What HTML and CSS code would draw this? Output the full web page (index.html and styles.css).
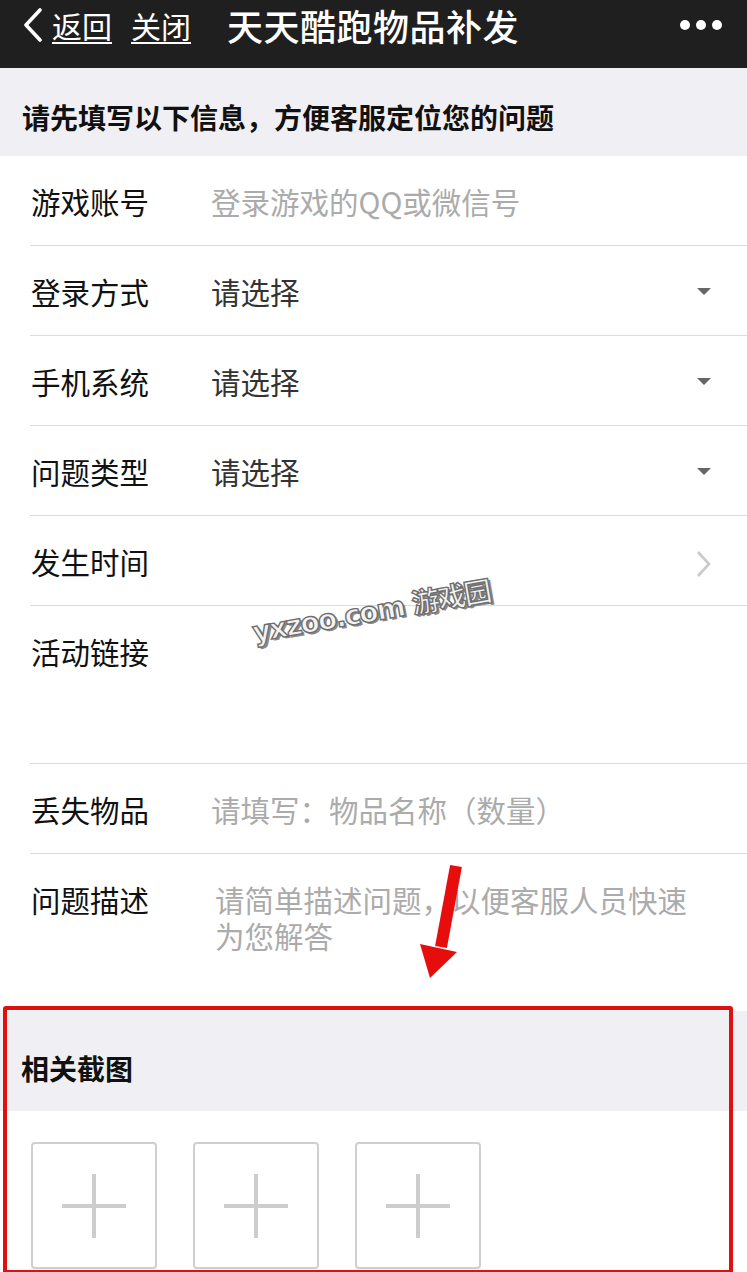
FILE: index.html
```html
<!DOCTYPE html>
<html lang="zh-CN">
<head>
<meta charset="utf-8">
<title>天天酷跑物品补发</title>
<link rel="stylesheet" href="styles.css">
</head>
<body>
<div class="page">
  <header class="topbar">
    <svg class="back-icon" width="22" height="34" viewBox="0 0 22 34"><path d="M18 2 L4 17 L18 32" fill="none" stroke="#fff" stroke-width="3.6" stroke-linecap="round" stroke-linejoin="round"/></svg>
    <a class="nav-link back-text">返回</a>
    <a class="nav-link close-text">关闭</a>
    <h1 class="title">天天酷跑物品补发</h1>
    <div class="more"><span></span><span></span><span></span></div>
  </header>

  <div class="section-head first">请先填写以下信息，方便客服定位您的问题</div>

  <div class="form">
    <div class="row">
      <div class="label">游戏账号</div>
      <div class="value placeholder">登录游戏的QQ或微信号</div>
    </div>
    <div class="row">
      <div class="label">登录方式</div>
      <div class="value">请选择</div>
      <span class="caret"></span>
    </div>
    <div class="row">
      <div class="label">手机系统</div>
      <div class="value">请选择</div>
      <span class="caret"></span>
    </div>
    <div class="row">
      <div class="label">问题类型</div>
      <div class="value">请选择</div>
      <span class="caret"></span>
    </div>
    <div class="row">
      <div class="label">发生时间</div>
      <div class="value"></div>
      <svg class="chevron" width="18" height="28" viewBox="0 0 18 28"><path d="M3 2 L14 14 L3 26" fill="none" stroke="#c9c9c9" stroke-width="2.6"/></svg>
    </div>
    <div class="row tall">
      <div class="label">活动链接</div>
      <div class="value"></div>
    </div>
    <div class="row">
      <div class="label">丢失物品</div>
      <div class="value placeholder">请填写：物品名称（数量）</div>
    </div>
    <div class="row tall last">
      <div class="label">问题描述</div>
      <div class="value placeholder textarea">请简单描述问题，以便客服人员快速为您解答</div>
    </div>
  </div>

  <div class="section-head second">相关截图</div>

  <div class="uploads">
    <div class="upload"><span class="plus"></span></div>
    <div class="upload"><span class="plus"></span></div>
    <div class="upload"><span class="plus"></span></div>
  </div>

  <div class="watermark">yxzoo.com 游戏园</div>
  <svg class="arrow" width="747" height="1272" viewBox="0 0 747 1272">
    <line x1="456" y1="866" x2="441" y2="947" stroke="#e80d0d" stroke-width="12"/>
    <polygon points="420,944 457,952 430,978" fill="#e80d0d"/>
  </svg>
  <div class="highlight"></div>
</div>
</body>
</html>
```

FILE: styles.css
```css
html, body {
  margin: 0;
  padding: 0;
  background: #ffffff;
}
body {
  font-family: "Noto Sans CJK SC", "Noto Sans", sans-serif;
  color: #111;
}
.page {
  position: relative;
  width: 747px;
  height: 1272px;
  overflow: hidden;
  background: #fff;
}
.topbar {
  height: 68px;
  box-sizing: border-box;
  padding: 0 0 18px 22px;
  background: #1f1f1f;
  display: flex;
  align-items: center;
  color: #fff;
}
.back-icon {
  display: block;
  margin-right: 8px;
}
.nav-link {
  font-size: 30px;
  line-height: 40px;
  color: #fff;
  text-decoration: underline;
  text-underline-offset: 4px;
  text-decoration-thickness: 2px;
}
.back-text { margin-right: 19px; }
.close-text { margin-right: 36px; }
.title {
  margin: 0;
  font-size: 36px;
  font-weight: 500;
  line-height: 44px;
  letter-spacing: 0.5px;
  flex: 1;
}
.more {
  display: flex;
  gap: 6px;
  margin-right: 25px;
}
.more span {
  width: 10px;
  height: 10px;
  border-radius: 50%;
  background: #fff;
}
.section-head {
  background: #efeff4;
  font-weight: bold;
  font-size: 28px;
  padding-left: 22px;
  box-sizing: border-box;
}
.section-head.first {
  height: 88px;
  padding-top: 28px;
  line-height: 42px;
}
.section-head.second {
  height: 100px;
  padding-top: 36px;
  line-height: 42px;
  padding-left: 21px;
}
.form {
  background: #fff;
}
.row {
  margin-left: 30px;
  padding-left: 1px;
  padding-top: 25px;
  height: 90px;
  box-sizing: border-box;
  border-bottom: 1px solid #dcdcdc;
  display: flex;
  align-items: flex-start;
  font-size: 29.5px;
  line-height: 40px;
}
.row.tall {
  height: 158px;
}
.row.last {
  border-bottom: none;
  height: 157px;
}
.label {
  width: 180px;
  flex: none;
  color: #111;
}
.value {
  flex: 1;
  color: #333;
}
.placeholder {
  color: #ababab;
}
.textarea {
  flex: none;
  width: 486px;
  padding-left: 4px;
  padding-top: 2px;
  line-height: 36px;
}
.caret {
  width: 0;
  height: 0;
  border-left: 7px solid transparent;
  border-right: 7px solid transparent;
  border-top: 7px solid #666;
  margin: 17px 36px 0 0;
}
.chevron {
  display: block;
  margin: 9px 34px 0 0;
}
.uploads {
  display: flex;
  gap: 36px;
  padding: 31px 0 0 31px;
}
.upload {
  width: 126px;
  height: 127px;
  box-sizing: border-box;
  border: 2px solid #cfcfcf;
  border-radius: 4px;
  display: flex;
  align-items: center;
  justify-content: center;
}
.plus {
  position: relative;
  width: 64px;
  height: 64px;
}
.plus::before,
.plus::after {
  content: "";
  position: absolute;
  background: #cdcdcd;
}
.plus::before {
  left: 0;
  right: 0;
  top: 30px;
  height: 4px;
}
.plus::after {
  top: 0;
  bottom: 0;
  left: 30px;
  width: 4px;
}
.watermark {
  position: absolute;
  left: 256px;
  top: 610px;
  font-family: "DejaVu Sans", "Noto Sans CJK SC", sans-serif;
  font-weight: bold;
  font-size: 28px;
  color: #f4f4f4;
  -webkit-text-stroke: 1.4px #6f6f6f;
  text-shadow: 2px 2px 0 #8a8a8a;
  transform: rotate(-10deg);
  transform-origin: left bottom;
  white-space: nowrap;
  letter-spacing: -1.5px;
}
.arrow {
  position: absolute;
  left: 0;
  top: 0;
  pointer-events: none;
}
.highlight {
  position: absolute;
  left: 3px;
  top: 1006px;
  width: 730px;
  height: 268px;
  box-sizing: border-box;
  border: 4px solid #e0100f;
  border-radius: 3px;
}
```
